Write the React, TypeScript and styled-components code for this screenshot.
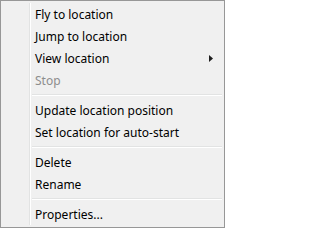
import React from 'react';
import styled, { createGlobalStyle } from 'styled-components';

const GlobalStyle = createGlobalStyle`
  html, body {
    margin: 0;
    padding: 0;
    background: #ffffff;
  }
`;

const Menu = styled.div`
  box-sizing: border-box;
  width: 225px;
  height: 228px;
  border: 1px solid #979797;
  background: #f0f0f0;
  padding: 2px;
  display: flex;
  flex-direction: column;
  font-family: 'Noto Sans', 'Open Sans', sans-serif;
  font-size: 12px;
  position: relative;
  cursor: default;
  user-select: none;

  /* gutter line next to icon column */
  &::before {
    content: '';
    position: absolute;
    top: 2px;
    bottom: 2px;
    left: 28px;
    width: 1px;
    background: #e2e3e3;
    border-right: 1px solid #ffffff;
  }
`;

type ItemProps = {
  $disabled?: boolean;
};

const Item = styled.div<ItemProps>`
  height: 22px;
  display: flex;
  align-items: center;
  padding-left: 32px;
  padding-right: 9px;
  color: ${({ $disabled }) => ($disabled ? '#8d8d8d' : '#000000')};
  white-space: nowrap;
  position: relative;
`;

const Label = styled.span`
  flex: 1;
`;

const Arrow = styled.svg`
  width: 4px;
  height: 7px;
`;

const Separator = styled.div`
  height: 8px;
  display: flex;
  flex-direction: column;
  justify-content: center;
  padding-left: 29px;

  &::before {
    content: '';
    display: block;
    height: 1px;
    background: #e2e3e3;
    border-bottom: 1px solid #ffffff;
  }
`;

type Entry =
  | { kind: 'item'; label: string; disabled?: boolean; submenu?: boolean }
  | { kind: 'sep' };

const entries: Entry[] = [
  { kind: 'item', label: 'Fly to location' },
  { kind: 'item', label: 'Jump to location' },
  { kind: 'item', label: 'View location', submenu: true },
  { kind: 'item', label: 'Stop', disabled: true },
  { kind: 'sep' },
  { kind: 'item', label: 'Update location position' },
  { kind: 'item', label: 'Set location for auto-start' },
  { kind: 'sep' },
  { kind: 'item', label: 'Delete' },
  { kind: 'item', label: 'Rename' },
  { kind: 'sep' },
  { kind: 'item', label: 'Properties...' },
];

export default function App() {
  return (
    <>
      <GlobalStyle />
      <Menu>
        {entries.map((e, i) =>
          e.kind === 'sep' ? (
            <Separator key={i} />
          ) : (
            <Item key={i} $disabled={e.disabled}>
              <Label>{e.label}</Label>
              {e.submenu && (
                <Arrow viewBox="0 0 4 7">
                  <path d="M0 0 L4 3.5 L0 7 Z" fill="#1e1e1e" />
                </Arrow>
              )}
            </Item>
          )
        )}
      </Menu>
    </>
  );
}
